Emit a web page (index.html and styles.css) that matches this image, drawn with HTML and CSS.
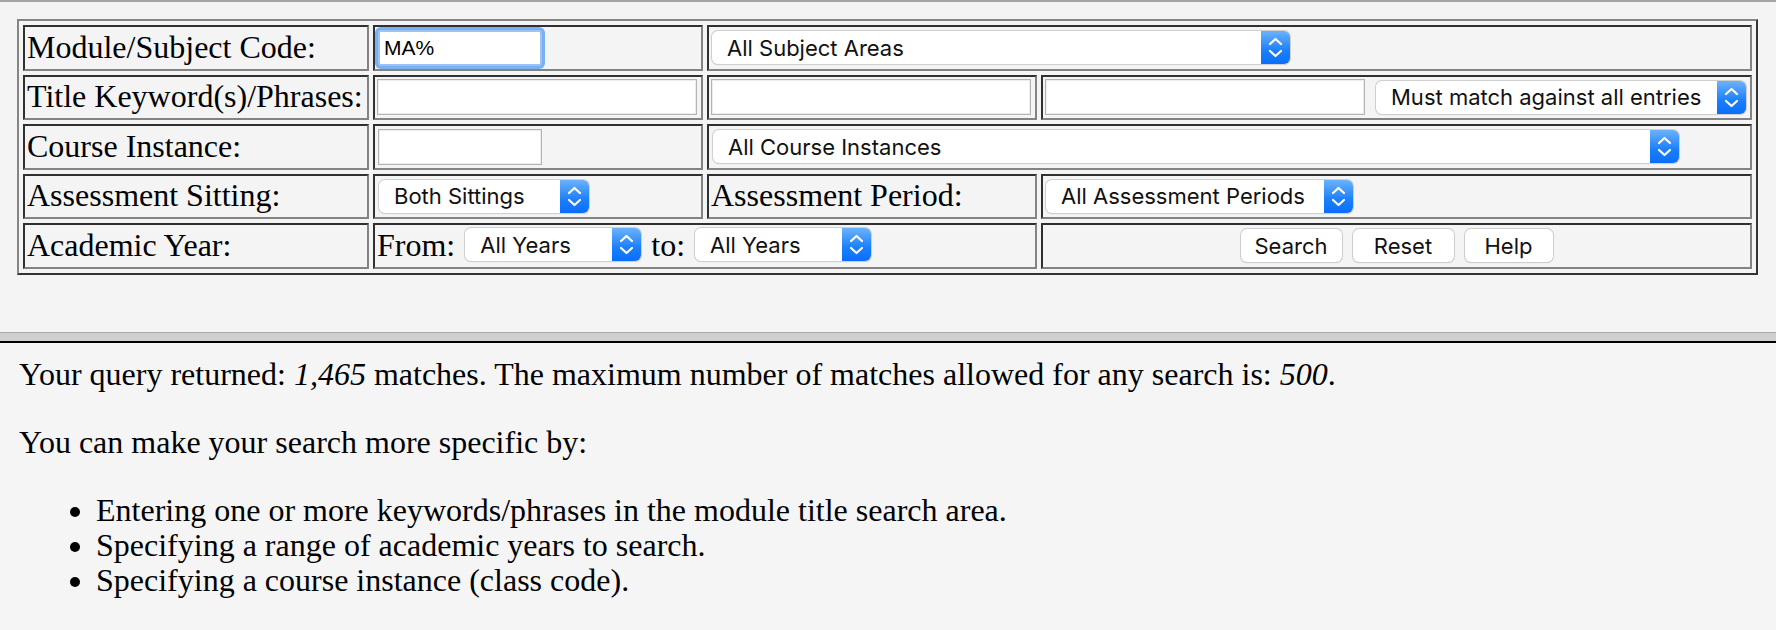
FILE: index.html
```html
<!DOCTYPE html>
<html lang="en">
<head>
<meta charset="utf-8">
<title>Module Search</title>
<link rel="stylesheet" href="styles.css">
</head>
<body>
<div class="top-frame">
  <form class="search-form">
    <table class="grid">
      <colgroup>
        <col class="col-a"><col class="col-b"><col class="col-c"><col class="col-d">
      </colgroup>
      <tr>
        <td><div class="cell label">Module/Subject Code:</div></td>
        <td><div class="cell"><input class="field field-short is-focused" type="text" value="MA%"></div></td>
        <td colspan="2"><div class="cell">
          <span class="select sel-subject"><select><option>All Subject Areas</option></select><span class="arrow"><svg width="29" height="33" viewBox="0 0 29 33"><polyline points="9,13 14.5,8 20,13"/><polyline points="9,20 14.5,25 20,20"/></svg></span></span>
        </div></td>
      </tr>
      <tr>
        <td><div class="cell label">Title Keyword(s)/Phrases:</div></td>
        <td><div class="cell"><input class="field field-long" type="text"></div></td>
        <td><div class="cell"><input class="field field-long" type="text"></div></td>
        <td><div class="cell cell-pair">
          <input class="field field-long" type="text">
          <span class="select sel-match"><select><option>Must match against all entries</option></select><span class="arrow"><svg width="29" height="33" viewBox="0 0 29 33"><polyline points="9,13 14.5,8 20,13"/><polyline points="9,20 14.5,25 20,20"/></svg></span></span>
        </div></td>
      </tr>
      <tr>
        <td><div class="cell label">Course Instance:</div></td>
        <td><div class="cell"><input class="field field-short" type="text"></div></td>
        <td colspan="2"><div class="cell">
          <span class="select sel-course"><select><option>All Course Instances</option></select><span class="arrow"><svg width="29" height="33" viewBox="0 0 29 33"><polyline points="9,13 14.5,8 20,13"/><polyline points="9,20 14.5,25 20,20"/></svg></span></span>
        </div></td>
      </tr>
      <tr>
        <td><div class="cell label">Assessment Sitting:</div></td>
        <td><div class="cell">
          <span class="select sel-sitting"><select><option>Both Sittings</option></select><span class="arrow"><svg width="29" height="33" viewBox="0 0 29 33"><polyline points="9,13 14.5,8 20,13"/><polyline points="9,20 14.5,25 20,20"/></svg></span></span>
        </div></td>
        <td><div class="cell label">Assessment Period:</div></td>
        <td><div class="cell">
          <span class="select sel-period"><select><option>All Assessment Periods</option></select><span class="arrow"><svg width="29" height="33" viewBox="0 0 29 33"><polyline points="9,13 14.5,8 20,13"/><polyline points="9,20 14.5,25 20,20"/></svg></span></span>
        </div></td>
      </tr>
      <tr>
        <td><div class="cell label">Academic Year:</div></td>
        <td colspan="2"><div class="cell label cell-years">
          <span>From:</span>
          <span class="select sel-year"><select><option>All Years</option></select><span class="arrow"><svg width="29" height="33" viewBox="0 0 29 33"><polyline points="9,13 14.5,8 20,13"/><polyline points="9,20 14.5,25 20,20"/></svg></span></span>
          <span>to:</span>
          <span class="select sel-year"><select><option>All Years</option></select><span class="arrow"><svg width="29" height="33" viewBox="0 0 29 33"><polyline points="9,13 14.5,8 20,13"/><polyline points="9,20 14.5,25 20,20"/></svg></span></span>
        </div></td>
        <td><div class="cell cell-buttons">
          <button type="button" class="btn btn-search">Search</button>
          <button type="button" class="btn btn-reset">Reset</button>
          <button type="button" class="btn btn-help">Help</button>
        </div></td>
      </tr>
    </table>
  </form>
</div>
<div class="frame-divider"></div>
<div class="bottom-frame">
  <p>Your query returned: <em>1,465</em> matches. The maximum number of matches allowed for any search is: <em>500</em>.</p>
  <p>You can make your search more specific by:</p>
  <ul>
    <li>Entering one or more keywords/phrases in the module title search area.</li>
    <li>Specifying a range of academic years to search.</li>
    <li>Specifying a course instance (class code).</li>
  </ul>
</div>
</body>
</html>
```
FILE: styles.css
```css
html, body {
  margin: 0;
  padding: 0;
}

body {
  background: #f5f5f5;
  font-family: "Liberation Serif", "Times New Roman", serif;
  font-size: 32px;
  color: #000;
}

.top-frame {
  height: 330px;
  border-top: 2px solid #a4a4a4;
  background: #f4f4f4;
}

.search-form {
  margin: 0;
  padding: 17px 17px 0 17px;
}

.grid {
  table-layout: fixed;
  width: 1741px;
  border-collapse: separate;
  border-spacing: 4px;
  border-style: solid;
  border-width: 2px;
  border-color: #858585 #333 #333 #858585;
}

.col-a { width: 346px; }
.col-b { width: 330px; }
.col-c { width: 330px; }
.col-d { width: 711px; }

.grid td {
  border-style: solid;
  border-width: 2px;
  border-color: #303030 #838383 #838383 #303030;
  padding: 2px;
  vertical-align: middle;
}

.cell {
  display: flex;
  align-items: center;
  height: 37.5px;
  white-space: nowrap;
}

.label {
  font-size: 32px;
  line-height: 36px;
  padding-bottom: 2px;
  box-sizing: border-box;
}

.cell-pair {
  gap: 11px;
}

.cell-years {
  gap: 10px;
}

.cell-buttons {
  justify-content: center;
  gap: 11px;
}

.field {
  box-sizing: border-box;
  height: 36px;
  margin: 0;
  padding: 0 5px;
  border: 1px solid #b4b4b4;
  box-shadow: inset 0 0 0 1px #ececec;
  background: #fff;
  font-family: "Liberation Sans", Arial, sans-serif;
  font-size: 21px;
  color: #000;
  outline: none;
}

.field-short { width: 164px; margin-left: 1px; }
.field-long { width: 320px; }

.field.is-focused {
  border: 2px solid #9cc3f4;
  box-shadow: 0 0 0 3px #79b0f3;
  border-radius: 3px;
  padding: 0 4px;
}

.select {
  display: inline-flex;
  flex: none;
  box-sizing: border-box;
  height: 33px;
  border-radius: 6px;
  background: #fff;
  box-shadow: 0 0 0 1px #cfcfcf, 0 1px 1px 0 rgba(0, 0, 0, 0.18);
  overflow: hidden;
}

.select select {
  appearance: none;
  -webkit-appearance: none;
  flex: 1;
  min-width: 0;
  height: 33px;
  margin: 0;
  padding: 0 0 0 15px;
  border: 0;
  background: transparent;
  font-family: Inter, "Liberation Sans", Arial, sans-serif;
  font-size: 22px;
  color: #111;
  outline: none;
}

.arrow {
  display: flex;
  width: 29px;
  height: 33px;
  background: linear-gradient(#6cb2fb, #1a7ffb 60%, #0a6ff9);
}

.arrow svg {
  fill: none;
  stroke: #fff;
  stroke-width: 2.2;
  stroke-linecap: round;
  stroke-linejoin: round;
}

.sel-subject { width: 578px; margin-left: 1px; }
.sel-match { width: 370px; }
.sel-course { width: 966px; margin-left: 2px; }
.sel-sitting { width: 210px; margin-left: 2px; }
.sel-period { width: 307px; margin-left: 1px; }
.sel-year { width: 176px; }

.btn {
  box-sizing: border-box;
  height: 33px;
  margin: 0;
  padding: 0;
  border: 0;
  border-radius: 6px;
  background: #fff;
  box-shadow: 0 0 0 1px #cdcdcd, 0 1px 1px 0 rgba(0, 0, 0, 0.2);
  font-family: Inter, "Liberation Sans", Arial, sans-serif;
  font-size: 22px;
  color: #111;
}

.btn-search { width: 101px; }
.btn-reset { width: 101px; }
.btn-help { width: 88px; }

.frame-divider {
  height: 8px;
  border-top: 1px solid #aaa;
  border-bottom: 2px solid #000;
  background: #d0d0d0;
}

.bottom-frame {
  padding: 14px 19px 20px 19px;
  background: #f5f5f5;
}

.bottom-frame p {
  margin: 0 0 33px 0;
  line-height: 35px;
}

.bottom-frame ul {
  margin: 0;
  padding: 0 0 0 77px;
  line-height: 35px;
}
```
